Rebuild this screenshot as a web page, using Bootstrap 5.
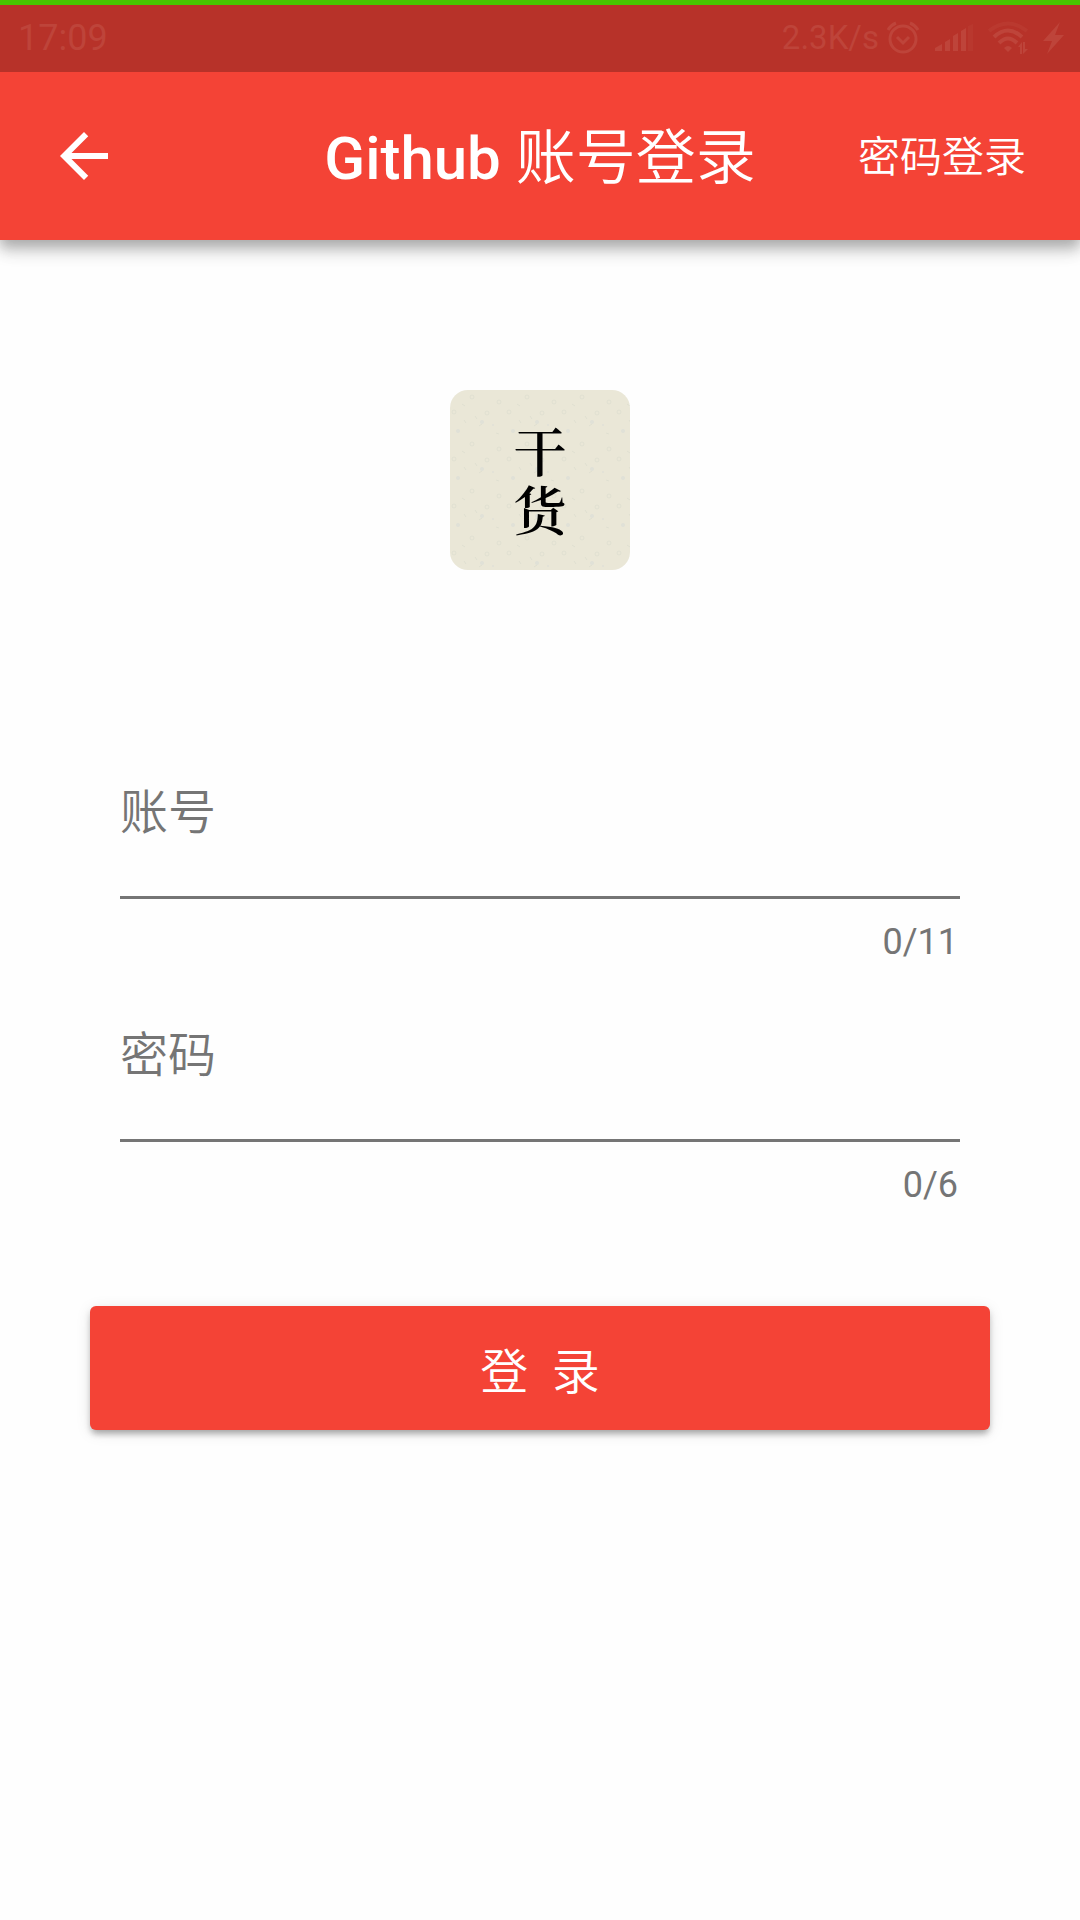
<!DOCTYPE html>
<html lang="zh-CN">
<head>
<meta charset="utf-8">
<meta name="viewport" content="width=device-width, initial-scale=1">
<title>Github 账号登录</title>
<link href="https://cdn.jsdelivr.net/npm/bootstrap@5.3.0/dist/css/bootstrap.min.css" rel="stylesheet">
<style>
  :root { --brand: #f44336; --hint: #757575; }
  body { background: #fefefe; font-family: Roboto, "Noto Sans CJK SC", sans-serif; }
  .status-strip { z-index: 1; height: 72px; padding: 0 15px 2px 18px; background: #b73229; color: #be443a; border-top: 5px solid #48c400; font-size: 36px; line-height: 48px; }
  .status-strip svg { display: block; fill: currentColor; }
  .status-icons { gap: 15px; }
  .net-speed { margin-right: 7px; font-size: 33px; }
  .app-header { height: 168px; padding: 0 54px; background: var(--brand); color: #fff; box-shadow: 0 6px 12px rgba(0,0,0,.2), 0 12px 15px rgba(0,0,0,.14), 0 3px 30px rgba(0,0,0,.06); }
  .header-side { display: flex; flex: 1 1 0; }
  .app-title { padding-top: 6px; font-size: 60px; line-height: 72px; font-weight: 500; }
  .app-title span { font-weight: 350; }
  .header-link { padding-top: 4px; font-size: 42px; line-height: 60px; font-weight: 350; }
  .login-area { padding: 150px 90px; }
  .logo-tile { display: block; width: 180px; height: 180px; }
  .logo-tile text { font: 600 53px "Noto Serif CJK SC", "Noto Sans CJK SC", serif; text-anchor: middle; }
  .fields { padding: 176px 30px 0; }
  .form-floating > .line-input, .form-floating > .line-input:focus { height: 153px; min-height: 0; padding: 48px 0 24px; border: 0; border-bottom: 3px solid var(--hint); border-radius: 0; background: transparent; box-shadow: none; font-size: 48px; line-height: 72px; }
  .form-floating > .line-label, .form-floating > .line-input:focus ~ .line-label { height: auto; padding: 31px 0 0; border: 0; color: var(--hint); font-size: 48px; line-height: 72px; font-weight: 350; opacity: 1; }
  .field-count { height: 90px; padding: 19px 2px 0 0; color: var(--hint); font-size: 36px; line-height: 48px; }
  .login-btn { --bs-btn-bg: var(--brand); --bs-btn-color: #fff; --bs-btn-hover-bg: #e53935; --bs-btn-hover-color: #fff; --bs-btn-active-bg: #d32f2f; height: 124px; margin-top: 74px; padding: 10px 0 0; border: 0; border-radius: 6px; font-size: 48px; line-height: 72px; font-weight: 350; box-shadow: 0 6px 6px -3px rgba(0,0,0,.2), 0 4px 6px rgba(0,0,0,.14), 0 3px 15px rgba(0,0,0,.1); }
</style>
</head>
<body>
<div class="status-strip position-relative d-flex justify-content-between align-items-center">
  <span>17:09</span>
  <div class="d-flex align-items-center">
    <span class="net-speed">2.3K/s</span>
    <div class="status-icons d-flex align-items-center">
      <svg width="34" height="34" viewBox="0 0 34 34" aria-hidden="true"><g fill="none" stroke="currentColor" stroke-width="3"><circle cx="17" cy="18" r="13"/><path d="M2 9Q5 4 10 2M32 9Q29 4 24 2M11 16l6 6 6-6"/></g></svg>
      <svg width="38" height="30" viewBox="0 0 38 30" aria-hidden="true"><path d="M0 28v-3l7-4v7zM10 19l5-3v12h-5zM18 13l5-3v18h-5zM26 8l5-3v23h-5z"/><path opacity=".35" d="M33 3l5-2v27h-5z"/></svg>
      <svg width="40" height="34" viewBox="0 0 40 34" aria-hidden="true"><g fill="none" stroke="currentColor" stroke-width="4"><path opacity=".4" d="M1 10Q20-5 39 10"/><path d="M6 16Q20 3 34 16M11 22Q20 13 29 22"/></g><path d="M16 27q4-4 8 0l-4 4zM30 26l4-5v12h-2v-7zM35 21h2v7h3l-5 5z"/></svg>
      <svg width="22" height="32" viewBox="0 0 22 32" aria-hidden="true"><path d="M17 0L0 19h9L4 32 21 13h-9z"/></svg>
    </div>
  </div>
</div>
<header class="app-header d-flex align-items-center">
  <div class="header-side">
    <a href="#" class="d-block text-white" aria-label="返回"><svg class="d-block" width="60" height="72" viewBox="2 0 20 24" fill="currentColor"><path d="M20 11H7.830l5.590-5.590L12 4l-8 8 8 8 1.410-1.410L7.830 13H20z"/></svg></a>
  </div>
  <h1 class="app-title m-0 text-nowrap">Github <span>账号登录</span></h1>
  <div class="header-side justify-content-end"><a href="#" class="header-link text-white text-decoration-none text-nowrap">密码登录</a></div>
</header>
<main class="login-area">
  <svg class="logo-tile mx-auto" viewBox="0 0 180 180" role="img" aria-label="干货">
    <defs>
      <pattern id="speckle" width="55" height="47" patternUnits="userSpaceOnUse">
        <g fill="none" stroke="#dfdfd0" stroke-width="1"><circle cx="4" cy="22" r="2"/><circle cx="22" cy="7" r="2"/><circle cx="37" cy="23" r="2"/><circle cx="49" cy="12" r="2"/><path d="M12 14l3 2M29 36l3-2M14 30l2 3M46 43l3 1M25 26l2 3"/></g>
        <g fill="#e0e1d7"><circle cx="32" cy="32" r="2"/><circle cx="8" cy="41" r="2"/><circle cx="43" cy="35" r="1"/></g>
      </pattern>
    </defs>
    <rect width="180" height="180" rx="18" fill="#eae7d7"/>
    <rect width="180" height="180" rx="18" fill="url(#speckle)"/>
    <text><tspan x="90" y="82">干</tspan><tspan x="90" y="141">货</tspan></text>
  </svg>
  <form>
    <div class="fields">
      <div class="form-floating">
        <input type="text" class="form-control line-input" id="account" placeholder=" " maxlength="11">
        <label class="line-label" for="account">账号</label>
      </div>
      <div class="field-count text-end">0/11</div>
      <div class="form-floating">
        <input type="password" class="form-control line-input" id="password" placeholder=" " maxlength="6">
        <label class="line-label" for="password">密码</label>
      </div>
      <div class="field-count text-end">0/6</div>
    </div>
    <button type="button" class="btn login-btn w-100">登&nbsp;&nbsp;录</button>
  </form>
</main>
<script src="https://cdn.jsdelivr.net/npm/bootstrap@5.3.0/dist/js/bootstrap.bundle.min.js"></script>
</body>
</html>
